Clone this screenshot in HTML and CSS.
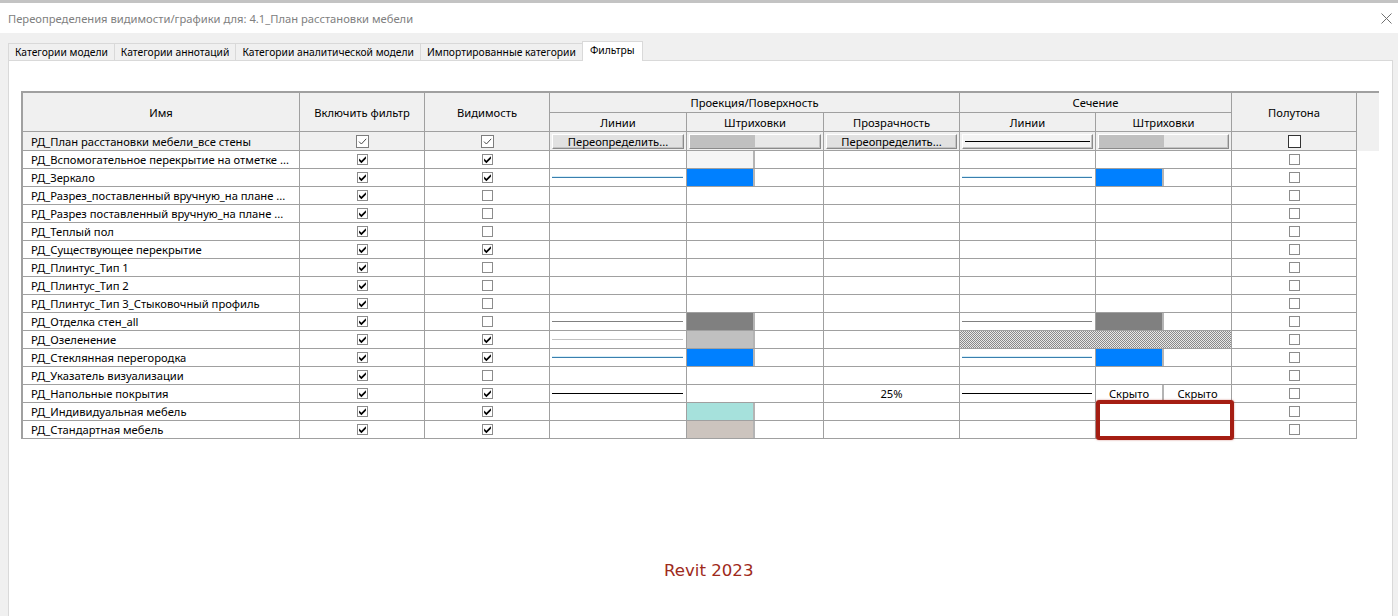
FILE: index.html
```html
<!DOCTYPE html>
<html lang="ru">
<head>
<meta charset="utf-8">
<title>Переопределения видимости/графики</title>
<link rel="stylesheet" href="styles.css">
</head>
<body>
<svg class="defs" width="0" height="0" aria-hidden="true">
  <symbol id="chk" viewBox="0 0 9 9"><path d="M1.1 3.5 L3.4 5.8 L7.9 1.3 V3.8 L3.4 8.3 L1.1 6 Z" fill="#000"/></symbol>
  <symbol id="chk-thin" viewBox="0 0 11 11"><path d="M2 5.6 L4.4 8 L9.2 2.8" stroke="#4a4a4a" stroke-width="1" fill="none"/></symbol>
</svg>
<div class="window">
  <div class="titlebar">
    <span class="title">Переопределения видимости/графики для: 4.1_План расстановки мебели</span>
    <svg class="close" width="11" height="11" viewBox="0 0 11 11"><path d="M0.5 0.5 L10.5 10.5 M10.5 0.5 L0.5 10.5" stroke="#707070" stroke-width="1" fill="none"/></svg>
  </div>
  <div class="tabstrip">
    <div class="tab">Категории модели</div>
    <div class="tab">Категории аннотаций</div>
    <div class="tab">Категории аналитической модели</div>
    <div class="tab">Импортированные категории</div>
    <div class="tab active">Фильтры</div>
  </div>
  <div class="panel">
    <div class="table">
      <div class="thead">
        <div class="th tall">Имя</div>
        <div class="th tall">Включить фильтр</div>
        <div class="th tall">Видимость</div>
        <div class="th proj">Проекция/Поверхность</div>
        <div class="th sec">Сечение</div>
        <div class="th tall">Полутона</div>
        <div class="th tall extra"></div>
        <div class="th">Линии</div>
        <div class="th">Штриховки</div>
        <div class="th">Прозрачность</div>
        <div class="th">Линии</div>
        <div class="th">Штриховки</div>
      </div>

      <div class="row edit">
        <div class="cell name">РД_План расстановки мебели_все стены</div>
        <div class="cell"><span class="cb lg"><svg width="11" height="11"><use href="#chk-thin"/></svg></span></div>
        <div class="cell"><span class="cb lg"><svg width="11" height="11"><use href="#chk-thin"/></svg></span></div>
        <div class="cell fill"><span class="btn">Переопределить...</span></div>
        <div class="cell fill"><span class="btn hatch"><i class="in"></i></span></div>
        <div class="cell fill"><span class="btn">Переопределить...</span></div>
        <div class="cell fill"><span class="btn lined"><i class="ln black"></i></span></div>
        <div class="cell fill"><span class="btn hatch"><i class="in"></i></span></div>
        <div class="cell"><span class="cb lg dark"></span></div>
      </div>

      <div class="row">
        <div class="cell name">РД_Вспомогательное перекрытие на отметке ...</div>
        <div class="cell"><span class="cb"><svg width="9" height="9"><use href="#chk"/></svg></span></div>
        <div class="cell"><span class="cb"><svg width="9" height="9"><use href="#chk"/></svg></span></div>
        <div class="cell"></div>
        <div class="cell split"><i class="sw pale"></i></div>
        <div class="cell"></div>
        <div class="cell"></div>
        <div class="cell"></div>
        <div class="cell"><span class="cb"></span></div>
      </div>

      <div class="row">
        <div class="cell name">РД_Зеркало</div>
        <div class="cell"><span class="cb"><svg width="9" height="9"><use href="#chk"/></svg></span></div>
        <div class="cell"><span class="cb"><svg width="9" height="9"><use href="#chk"/></svg></span></div>
        <div class="cell fill"><i class="ln blue"></i></div>
        <div class="cell split"><i class="sw blue"></i></div>
        <div class="cell"></div>
        <div class="cell fill"><i class="ln blue"></i></div>
        <div class="cell split"><i class="sw blue"></i></div>
        <div class="cell"><span class="cb"></span></div>
      </div>

      <div class="row">
        <div class="cell name">РД_Разрез_поставленный вручную_на плане ...</div>
        <div class="cell"><span class="cb"><svg width="9" height="9"><use href="#chk"/></svg></span></div>
        <div class="cell"><span class="cb"></span></div>
        <div class="cell"></div>
        <div class="cell"></div>
        <div class="cell"></div>
        <div class="cell"></div>
        <div class="cell"></div>
        <div class="cell"><span class="cb"></span></div>
      </div>

      <div class="row">
        <div class="cell name">РД_Разрез поставленный вручную_на плане ...</div>
        <div class="cell"><span class="cb"><svg width="9" height="9"><use href="#chk"/></svg></span></div>
        <div class="cell"><span class="cb"></span></div>
        <div class="cell"></div>
        <div class="cell"></div>
        <div class="cell"></div>
        <div class="cell"></div>
        <div class="cell"></div>
        <div class="cell"><span class="cb"></span></div>
      </div>

      <div class="row">
        <div class="cell name">РД_Теплый пол</div>
        <div class="cell"><span class="cb"><svg width="9" height="9"><use href="#chk"/></svg></span></div>
        <div class="cell"><span class="cb"></span></div>
        <div class="cell"></div>
        <div class="cell"></div>
        <div class="cell"></div>
        <div class="cell"></div>
        <div class="cell"></div>
        <div class="cell"><span class="cb"></span></div>
      </div>

      <div class="row">
        <div class="cell name">РД_Существующее перекрытие</div>
        <div class="cell"><span class="cb"><svg width="9" height="9"><use href="#chk"/></svg></span></div>
        <div class="cell"><span class="cb"><svg width="9" height="9"><use href="#chk"/></svg></span></div>
        <div class="cell"></div>
        <div class="cell"></div>
        <div class="cell"></div>
        <div class="cell"></div>
        <div class="cell"></div>
        <div class="cell"><span class="cb"></span></div>
      </div>

      <div class="row">
        <div class="cell name">РД_Плинтус_Тип 1</div>
        <div class="cell"><span class="cb"><svg width="9" height="9"><use href="#chk"/></svg></span></div>
        <div class="cell"><span class="cb"></span></div>
        <div class="cell"></div>
        <div class="cell"></div>
        <div class="cell"></div>
        <div class="cell"></div>
        <div class="cell"></div>
        <div class="cell"><span class="cb"></span></div>
      </div>

      <div class="row">
        <div class="cell name">РД_Плинтус_Тип 2</div>
        <div class="cell"><span class="cb"><svg width="9" height="9"><use href="#chk"/></svg></span></div>
        <div class="cell"><span class="cb"></span></div>
        <div class="cell"></div>
        <div class="cell"></div>
        <div class="cell"></div>
        <div class="cell"></div>
        <div class="cell"></div>
        <div class="cell"><span class="cb"></span></div>
      </div>

      <div class="row">
        <div class="cell name">РД_Плинтус_Тип 3_Стыковочный профиль</div>
        <div class="cell"><span class="cb"><svg width="9" height="9"><use href="#chk"/></svg></span></div>
        <div class="cell"><span class="cb"></span></div>
        <div class="cell"></div>
        <div class="cell"></div>
        <div class="cell"></div>
        <div class="cell"></div>
        <div class="cell"></div>
        <div class="cell"><span class="cb"></span></div>
      </div>

      <div class="row">
        <div class="cell name">РД_Отделка стен_all</div>
        <div class="cell"><span class="cb"><svg width="9" height="9"><use href="#chk"/></svg></span></div>
        <div class="cell"><span class="cb"></span></div>
        <div class="cell fill"><i class="ln gray"></i></div>
        <div class="cell split"><i class="sw gray"></i></div>
        <div class="cell"></div>
        <div class="cell fill"><i class="ln gray"></i></div>
        <div class="cell split"><i class="sw gray"></i></div>
        <div class="cell"><span class="cb"></span></div>
      </div>

      <div class="row">
        <div class="cell name">РД_Озеленение</div>
        <div class="cell"><span class="cb"><svg width="9" height="9"><use href="#chk"/></svg></span></div>
        <div class="cell"><span class="cb"><svg width="9" height="9"><use href="#chk"/></svg></span></div>
        <div class="cell fill"><i class="ln silver"></i></div>
        <div class="cell split"><i class="sw silver"></i></div>
        <div class="cell"></div>
        <div class="cell span2 dots"></div>
        <div class="cell"><span class="cb"></span></div>
      </div>

      <div class="row">
        <div class="cell name">РД_Стеклянная перегородка</div>
        <div class="cell"><span class="cb"><svg width="9" height="9"><use href="#chk"/></svg></span></div>
        <div class="cell"><span class="cb"><svg width="9" height="9"><use href="#chk"/></svg></span></div>
        <div class="cell fill"><i class="ln blue"></i></div>
        <div class="cell split"><i class="sw blue"></i></div>
        <div class="cell"></div>
        <div class="cell fill"><i class="ln blue"></i></div>
        <div class="cell split"><i class="sw blue"></i></div>
        <div class="cell"><span class="cb"></span></div>
      </div>

      <div class="row">
        <div class="cell name">РД_Указатель визуализации</div>
        <div class="cell"><span class="cb"><svg width="9" height="9"><use href="#chk"/></svg></span></div>
        <div class="cell"><span class="cb"></span></div>
        <div class="cell"></div>
        <div class="cell"></div>
        <div class="cell"></div>
        <div class="cell"></div>
        <div class="cell"></div>
        <div class="cell"><span class="cb"></span></div>
      </div>

      <div class="row">
        <div class="cell name">РД_Напольные покрытия</div>
        <div class="cell"><span class="cb"><svg width="9" height="9"><use href="#chk"/></svg></span></div>
        <div class="cell"><span class="cb"><svg width="9" height="9"><use href="#chk"/></svg></span></div>
        <div class="cell fill"><i class="ln black"></i></div>
        <div class="cell"></div>
        <div class="cell">25%</div>
        <div class="cell fill"><i class="ln black"></i></div>
        <div class="cell split"><span class="half">Скрыто</span><span class="rest">Скрыто</span></div>
        <div class="cell"><span class="cb"></span></div>
      </div>

      <div class="row">
        <div class="cell name">РД_Индивидуальная мебель</div>
        <div class="cell"><span class="cb"><svg width="9" height="9"><use href="#chk"/></svg></span></div>
        <div class="cell"><span class="cb"><svg width="9" height="9"><use href="#chk"/></svg></span></div>
        <div class="cell"></div>
        <div class="cell split"><i class="sw teal"></i></div>
        <div class="cell"></div>
        <div class="cell"></div>
        <div class="cell"></div>
        <div class="cell"><span class="cb"></span></div>
      </div>

      <div class="row">
        <div class="cell name">РД_Стандартная мебель</div>
        <div class="cell"><span class="cb"><svg width="9" height="9"><use href="#chk"/></svg></span></div>
        <div class="cell"><span class="cb"><svg width="9" height="9"><use href="#chk"/></svg></span></div>
        <div class="cell"></div>
        <div class="cell split"><i class="sw beige"></i></div>
        <div class="cell"></div>
        <div class="cell"></div>
        <div class="cell"></div>
        <div class="cell"><span class="cb"></span></div>
      </div>

      <div class="highlight"></div>
    </div>
    <div class="footer">Revit 2023</div>
  </div>
</div>
</body>
</html>
```

FILE: styles.css
```css
* { box-sizing: border-box; }
html, body { margin: 0; height: 100%; }
body {
  background: #f0f0f0;
  font-family: "Noto Sans", "Open Sans", "DejaVu Sans", sans-serif;
  font-size: 11.2px;
  color: #000;
  overflow: hidden;
}
.defs { display: block; width: 0; height: 0; overflow: hidden; }

.titlebar {
  height: 33px;
  border-top: 3px solid #c3c3c3;
  background: #fff;
  display: flex;
  align-items: center;
  justify-content: space-between;
  padding: 0 6px 0 8px;
}
.title { color: #808080; white-space: nowrap; }
.close { display: block; }

.tabstrip {
  height: 27px;
  display: flex;
  align-items: flex-end;
  padding-left: 8px;
  font-size: 10.3px;
}
.tab {
  height: 17px;
  padding: 0 6px;
  border: 1px solid #d9d9d9;
  border-bottom: 0;
  margin-right: -1px;
  display: flex;
  align-items: center;
  white-space: nowrap;
  line-height: 1;
}
.tab.active {
  height: 20px;
  padding: 0 7px 2px;
  margin-bottom: -1px;
  background: #fff;
  position: relative;
  z-index: 1;
}

.panel {
  margin: 0 5px 0 8px;
  background: #fff;
  border: 1px solid #d9d9d9;
  border-bottom: 0;
  height: 556px;
  padding: 30px 0 0 12px;
}

.table {
  position: relative;
  width: max-content;
  border-top: 2px solid #a0a0a0;
  border-left: 2px solid #a0a0a0;
}
.thead {
  display: grid;
  grid-template-columns: 277px 125px 125px 137px 137px 136px 136px 136px 125px 22px;
  grid-template-rows: 20px 19px;
  background: #f0f0f0;
}
.th {
  border-right: 1px solid #a0a0a0;
  border-bottom: 1px solid #a0a0a0;
  display: flex;
  align-items: center;
  justify-content: center;
  white-space: nowrap;
}
.th.tall { grid-row: span 2; }
.th.proj { grid-column: span 3; }
.th.sec { grid-column: span 2; }
.th.extra { border: 0; }

.row {
  display: grid;
  grid-template-columns: 277px 125px 125px 137px 137px 136px 136px 136px 125px;
  height: 18px;
}
.row.edit { height: 19px; background: #f0f0f0; }
.cell {
  border-right: 1px solid #a0a0a0;
  border-bottom: 1px solid #a0a0a0;
  display: flex;
  align-items: center;
  justify-content: center;
  min-width: 0;
  white-space: nowrap;
}
.cell.name { justify-content: flex-start; padding-left: 8px; overflow: hidden; }
.cell.fill { justify-content: stretch; }
.cell.split { justify-content: flex-start; align-items: stretch; }
.cell.span2 { grid-column: span 2; }
.cell.dots {
  background: repeating-conic-gradient(#8a8a8a 0 25%, #e8e8e8 0 50%) 0 0 / 2px 2px;
}

.cb {
  display: block;
  width: 11px;
  height: 11px;
  border: 1px solid #8c8c8c;
  background: #fff;
}
.cb svg { display: block; }
.cb.lg { width: 13px; height: 13px; border-color: #7d7d7d; }
.cb.lg.dark { border-color: #333; }

.ln { display: block; flex: 1; height: 1px; margin: 0 3px 0 2px; background: #000; }
.ln.blue { background: #3a7fae; box-shadow: 0 -1px 0 #d6eef8; }
.ln.gray { background: #808080; }
.ln.silver { background: #c0c0c0; }
.ln.black { background: #000; }

.sw { display: block; width: 68px; border-right: 2px solid #b4b4b4; }
.sw.pale { background: #f5f5f5; }
.sw.blue { background: #0080ff; }
.sw.gray { background: #808080; }
.sw.silver { background: #c0c0c0; }
.sw.teal { background: #a6e1dc; }
.sw.beige { background: #ccc4be; }

.half {
  width: 68px;
  border-right: 2px solid #b4b4b4;
  display: flex;
  align-items: center;
  justify-content: center;
}
.rest { flex: 1; display: flex; align-items: center; justify-content: center; }

.btn {
  flex: 1;
  align-self: stretch;
  margin: 2px 2px 1px 2px;
  background: #e1e1e1;
  border: 1px solid;
  border-color: #fff #8a8a8a #8a8a8a #fff;
  box-shadow: inset -1px -1px 0 #c4c4c4;
  display: flex;
  align-items: center;
  justify-content: center;
  line-height: 1;
}
.btn.hatch { justify-content: flex-start; background: #e8e8e8; }
.btn.hatch .in { display: block; width: 65px; align-self: stretch; background: #c0c0c0; }
.btn.lined { justify-content: stretch; background: #f4f4f4; }
.btn.lined .ln { margin: 0 2px; }

.highlight {
  position: absolute;
  left: 1073px;
  top: 307px;
  width: 138px;
  height: 40px;
  border: 4px solid #a51d12;
  border-radius: 3px;
  box-shadow: 0 0 2px rgba(165, 29, 18, 0.55);
}

.footer {
  margin-top: 122px;
  padding-left: 643px;
  font-family: "DejaVu Sans", sans-serif;
  font-size: 16.6px;
  line-height: 19px;
  color: #9e2a1b;
}
```
